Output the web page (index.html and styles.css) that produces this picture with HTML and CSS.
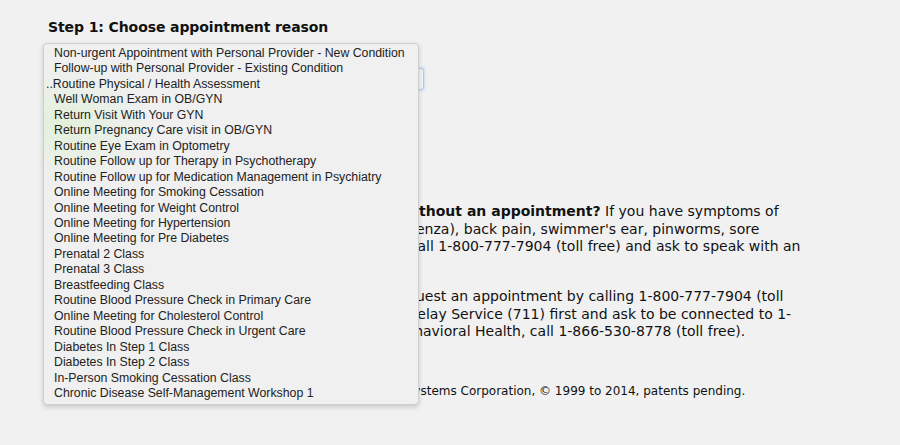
FILE: index.html
```html
<!DOCTYPE html>
<html lang="en">
<head>
    <meta charset="UTF-8">
    <title>Schedule an Appointment</title>
    <link rel="stylesheet" href="styles.css">
</head>
<body>
    <div class="page">
        <h2 class="step-title">Step 1: Choose appointment reason</h2>
        <div class="picker">
            <div class="select-box"></div>
            <ul class="menu">
                <li>Non-urgent Appointment with Personal Provider - New Condition</li>
                <li>Follow-up with Personal Provider - Existing Condition</li>
                <li class="checked">Routine Physical / Health Assessment</li>
                <li>Well Woman Exam in OB/GYN</li>
                <li>Return Visit With Your GYN</li>
                <li>Return Pregnancy Care visit in OB/GYN</li>
                <li>Routine Eye Exam in Optometry</li>
                <li>Routine Follow up for Therapy in Psychotherapy</li>
                <li>Routine Follow up for Medication Management in Psychiatry</li>
                <li>Online Meeting for Smoking Cessation</li>
                <li>Online Meeting for Weight Control</li>
                <li>Online Meeting for Hypertension</li>
                <li>Online Meeting for Pre Diabetes</li>
                <li>Prenatal 2 Class</li>
                <li>Prenatal 3 Class</li>
                <li>Breastfeeding Class</li>
                <li>Routine Blood Pressure Check in Primary Care</li>
                <li>Online Meeting for Cholesterol Control</li>
                <li>Routine Blood Pressure Check in Urgent Care</li>
                <li>Diabetes In Step 1 Class</li>
                <li>Diabetes In Step 2 Class</li>
                <li>In-Person Smoking Cessation Class</li>
                <li>Chronic Disease Self-Management Workshop 1</li>
            </ul>
        </div>

        <p class="info">
            <b>Need to see somebody today? Can I be seen without an appointment?</b> If you have symptoms of<br>
            a cold, coughs, sinus infection, pinkeye, fevers (influenza), back pain, swimmer's ear, pinworms, sore<br>
            throat, hives or urinary tract infection (UTI), please call 1-800-777-7904 (toll free) and ask to speak with an<br>
            advice nurse.
        </p>

        <p class="info">
            If you need any help scheduling, you can always request an appointment by calling 1-800-777-7904 (toll<br>
            free). TTY users should call the Washington State's Relay Service (711) first and ask to be connected to 1-<br>
            800-777-7904 (toll free). For questions regarding Behavioral Health, call 1-866-530-8778 (toll free).
        </p>

        <p class="footer">Group Health Cooperative. MyChart&reg; is licensed from Epic Systems Corporation, &copy; 1999 to 2014, patents pending.</p>
    </div>
</body>
</html>
```

FILE: styles.css
```css
html, body {
    margin: 0;
    background: #f1f1f1;
}
body {
    min-height: 100vh;
}
.page {
    padding: 17px 0 0 48px;
    font-family: "DejaVu Sans", Verdana, sans-serif;
    color: #111;
}
.step-title {
    margin: 0;
    font-size: 14px;
    font-weight: 700;
    letter-spacing: -0.1px;
    line-height: 20px;
}
.picker {
    position: relative;
    padding-top: 31px;
}
.select-box {
    width: 374px;
    height: 20px;
    border: 1px solid #b8c8e8;
    border-radius: 3px;
    box-shadow: 0 0 2px 1px #cfdcf5;
    background: #f4f4f4;
}
.menu {
    position: absolute;
    left: -5px;
    top: 6px;
    width: 374px;
    margin: 0;
    padding: 2px 0 3px;
    list-style: none;
    background: radial-gradient(ellipse 90px 60px at 20px 80px, #e2f0dc, rgba(241, 241, 241, 0)), #f0f0f0;
    border: 1px solid #cfcfcf;
    border-radius: 4px;
    box-shadow: 0 2px 5px rgba(0, 0, 0, 0.18);
    font-family: "Liberation Sans", Arial, sans-serif;
    font-size: 12.3px;
    line-height: 15.45px;
    color: #222;
    z-index: 2;
}
.menu li {
    padding-left: 10px;
    white-space: nowrap;
}
.menu li.checked::before {
    content: "..";
    margin-left: -8px;
}
.info {
    margin: 113px 0 0;
    font-size: 14px;
    line-height: 17.5px;
    white-space: nowrap;
}
.info + .info {
    margin-top: 15px;
}
.footer {
    margin: 43px 0 0;
    font-size: 12px;
    line-height: 15px;
    white-space: nowrap;
}
```
